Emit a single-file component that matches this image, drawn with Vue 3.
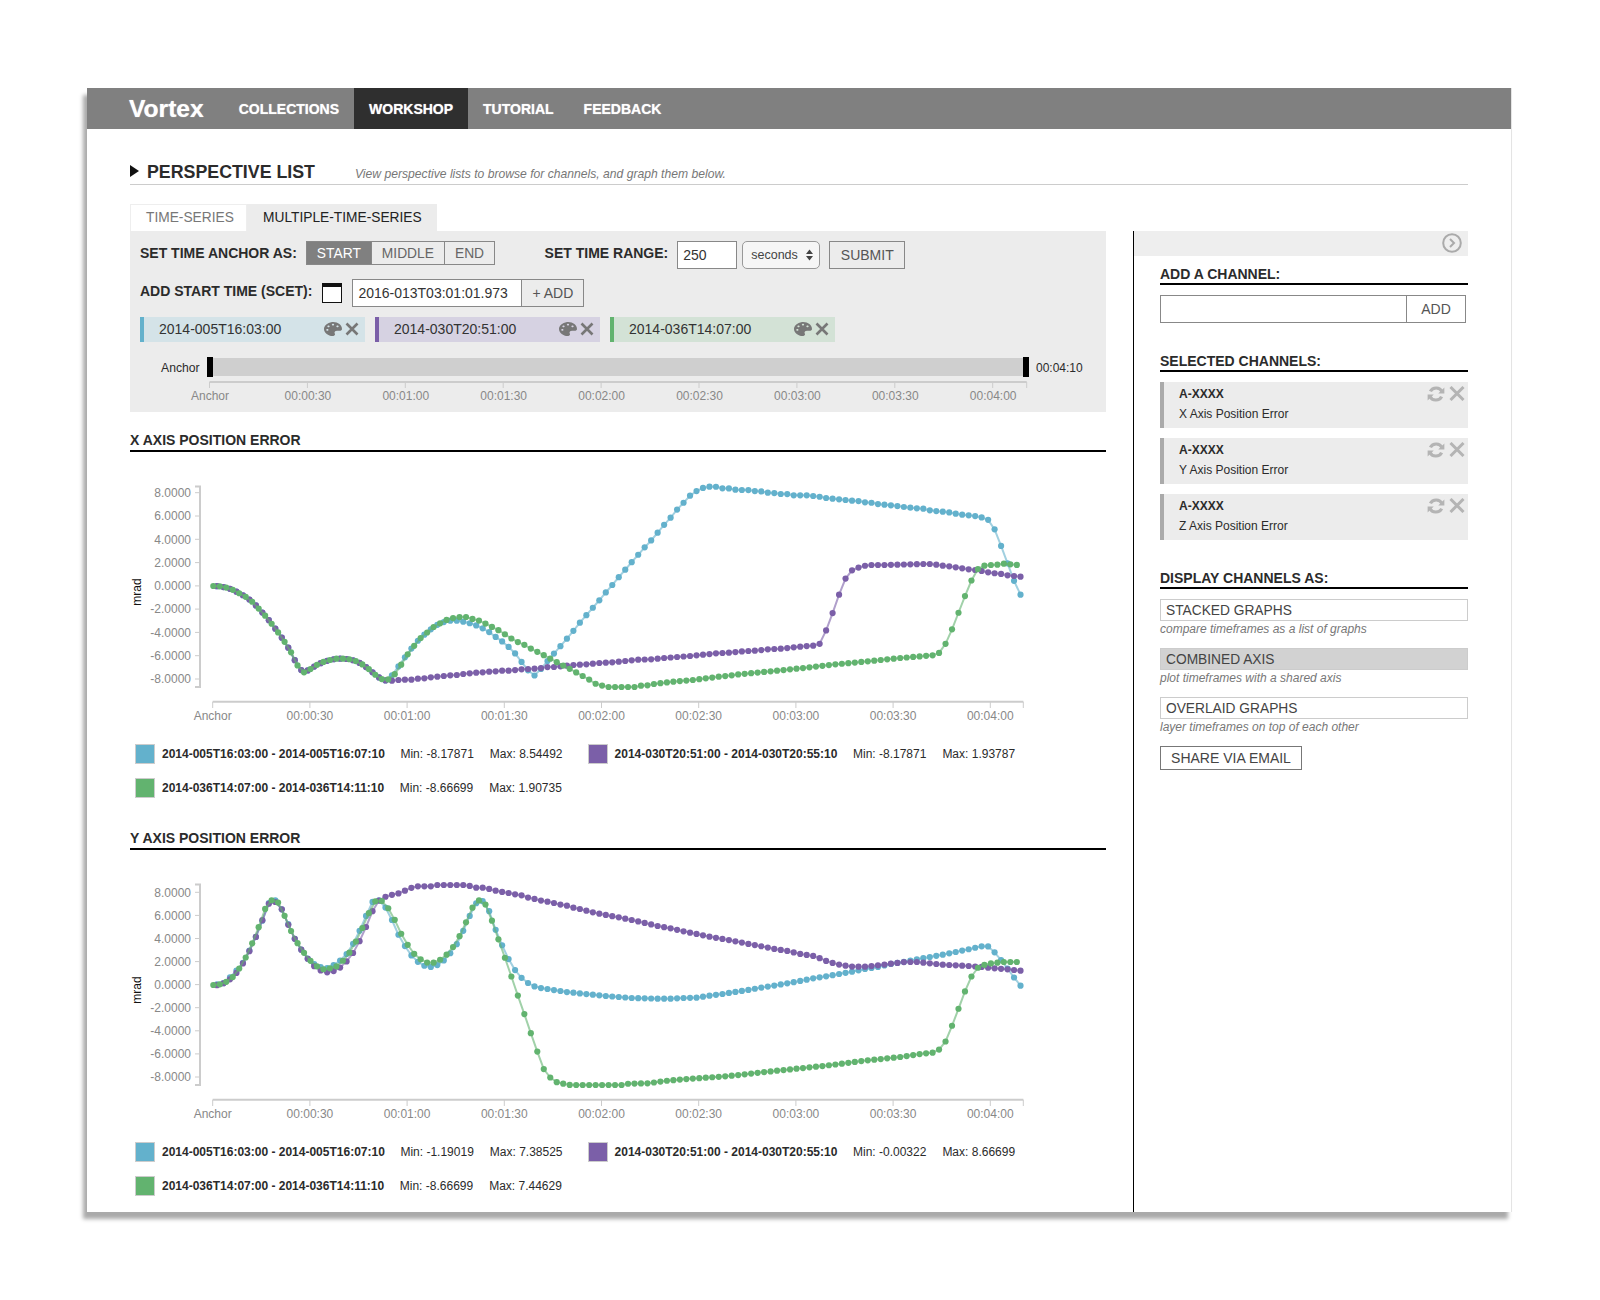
<script setup>
import { ref } from 'vue'

const teal = '#63b1cc'
const purple = '#7b5fa8'
const green = '#62b36f'

const newTime = ref('2016-013T03:01:01.973')
const range = ref('250')
const channel = ref('')

const navItems = ['COLLECTIONS', 'WORKSHOP', 'TUTORIAL', 'FEEDBACK']
const anchors = ['START', 'MIDDLE', 'END']
const chips = [
  { label: '2014-005T16:03:00', cls: 'chip-teal' },
  { label: '2014-030T20:51:00', cls: 'chip-purple' },
  { label: '2014-036T14:07:00', cls: 'chip-green' }
]
const timeLabels = ['Anchor', '00:00:30', '00:01:00', '00:01:30', '00:02:00', '00:02:30', '00:03:00', '00:03:30', '00:04:00']
const yLabels = ['8.0000', '6.0000', '4.0000', '2.0000', '0.0000', '-2.0000', '-4.0000', '-6.0000', '-8.0000']

const rangeTicks = timeLabels.map((label, i) => ({ label, x: 209.5 + 97.9 * i }))
const chartTicks = timeLabels.map((label, i) => ({ label, x: 212.7 + 97.2 * i }))

const selected = [
  { id: 'A-XXXX', name: 'X Axis Position Error' },
  { id: 'A-XXXX', name: 'Y Axis Position Error' },
  { id: 'A-XXXX', name: 'Z Axis Position Error' }
]
const displayModes = [
  { label: 'STACKED GRAPHS', note: 'compare timeframes as a list of graphs', on: false },
  { label: 'COMBINED AXIS', note: 'plot timeframes with a shared axis', on: true },
  { label: 'OVERLAID GRAPHS', note: 'layer timeframes on top of each other', on: false }
]

// traced curves, x/y read off the screenshot at 3x, split into a left and right half
function trace(oy, left, right) {
  const pts = []
  left.forEach(([x, y]) => pts.push([120 + x / 3, oy + y / 3]))
  right.forEach(([x, y]) => {
    const px = 570 + x / 3
    if (px > pts[pts.length - 1][0]) pts.push([px, oy + y / 3])
  })
  return pts
}

// one sample every 2 seconds
function resample(pts, x0) {
  const out = []
  let j = 0
  for (let i = 0; i < 125; i++) {
    const x = x0 + i * 6.48
    while (j < pts.length - 2 && pts[j + 1][0] < x) j++
    const [ax, ay] = pts[j]
    const [bx, by] = pts[j + 1]
    const t = Math.min(1, Math.max(0, (x - ax) / (bx - ax)))
    out.push({ x: +x.toFixed(2), y: +(ay + (by - ay) * t).toFixed(2) })
  }
  return out
}

function series(color, x0, pts) {
  const dots = resample(pts, x0)
  return { color, dots, line: dots.map((d) => d.x + ',' + d.y).join(' ') }
}

const sharedX = [[280,348],[300,349],[320,353],[340,360],[360,371],[380,382],[400,398],[420,420],[440,442],[460,468],[480,495],[500,525],[515,550],[530,583],[550,608],[570,598],[590,585],[610,576],[630,570],[650,566],[670,566],[690,568],[710,574],[730,585],[750,600],[770,618],[790,630],[800,632]]

const tealX = trace(470, [...sharedX,
  [820,612],[845,575],[860,555],[880,528],[900,505],[920,488],[945,468],[965,458],[985,452],[1010,452],[1030,455],[1050,460],[1068,466],[1088,475],[1107,486],[1126,500],[1145,513],[1165,530],[1185,550],[1204,575],[1225,602],[1243,617],[1262,598],[1281,575],[1300,553],[1320,530],[1340,507],[1359,484]
], [[8,483],[28,460],[47,438],[67,415],[87,392],[106,369],[126,346],[145,323],[165,300],[184,278],[204,255],[223,233],[243,212],[262,189],[282,165],[301,144],[320,120],[340,99],[360,77],[378,64],[398,54],[418,50],[437,50],[457,55],[476,55],[495,59],[515,60],[534,60],[553,63],[573,64],[592,68],[612,69],[632,72],[651,72],[670,76],[690,76],[710,76],[729,78],[748,80],[768,84],[787,86],[807,88],[826,90],[845,92],[865,93],[884,97],[903,98],[923,102],[942,104],[962,106],[981,108],[1001,111],[1021,113],[1040,115],[1060,116],[1079,121],[1098,123],[1118,125],[1137,127],[1157,131],[1176,134],[1195,136],[1215,138],[1234,142],[1254,149],[1273,176],[1293,227],[1312,278],[1331,330],[1351,374]])

const purpleX = trace(470, [...sharedX,
  [815,632],[835,630],[855,629],[875,629],[893,626],[913,625],[933,622],[952,620],[972,618],[991,616],[1010,615],[1030,612],[1050,610],[1069,608],[1088,607],[1107,605],[1127,604],[1147,602],[1166,602],[1186,600],[1205,598],[1225,597],[1244,596],[1264,594],[1283,591],[1302,591],[1322,589],[1341,587],[1360,585]
], [[10,585],[49,583],[88,579],[127,577],[165,573],[205,569],[244,568],[283,564],[322,561],[361,558],[400,554],[439,550],[478,548],[517,544],[556,542],[594,538],[634,536],[672,532],[711,528],[731,527],[750,521],[769,480],[789,426],[808,372],[827,325],[847,300],[867,292],[886,287],[905,285],[945,285],[983,284],[1022,283],[1060,282],[1080,282],[1100,284],[1118,287],[1137,289],[1157,292],[1177,295],[1196,298],[1216,300],[1236,303],[1255,307],[1275,310],[1294,312],[1313,316],[1332,318],[1352,320]])

const greenX = trace(470, [...sharedX,
  [825,612],[845,582],[865,550],[883,527],[903,503],[922,487],[942,470],[962,459],[981,449],[1000,444],[1020,441],[1038,441],[1058,447],[1078,452],[1097,461],[1116,471],[1136,481],[1155,493],[1175,506],[1195,517],[1214,525],[1233,536],[1253,546],[1272,556],[1291,566],[1311,577],[1330,587],[1350,597],[1370,608]
], [[18,607],[38,618],[58,629],[78,642],[97,647],[116,651],[136,651],[194,651],[213,647],[233,646],[252,642],[292,637],[331,633],[369,630],[408,625],[447,620],[486,616],[506,613],[603,604],[700,594],[797,583],[894,574],[991,564],[1088,556],[1107,549],[1127,521],[1147,476],[1166,427],[1185,378],[1205,330],[1224,297],[1243,287],[1263,285],[1283,284],[1302,281],[1322,283],[1342,285]])

const tealY = trace(462, [[280,375],[310,370],[338,345],[368,310],[388,272],[408,230],[428,180],[447,128],[465,120],[485,147],[505,193],[524,236],[543,268],[563,296],[582,312],[603,322],[622,324],[640,316],[660,302],[680,282],[699,252],[718,214],[738,168],[757,126],[776,120],[795,140],[815,178],[834,222],[854,257],[873,285],[893,305],[912,317],[932,321],[951,316],[971,302],[990,281],[1010,253],[1029,214],[1048,170],[1068,130],[1087,122],[1107,152],[1126,207],[1146,255],[1165,296],[1185,330],[1204,353],[1224,369],[1243,379],[1262,384],[1282,387],[1301,390],[1321,393],[1340,396],[1360,398]],
  [[8,398],[28,400],[68,404],[107,408],[146,411],[185,414],[224,415],[262,416],[301,416],[340,414],[379,413],[418,407],[457,402],[495,396],[534,390],[573,383],[612,377],[651,370],[690,363],[729,355],[768,349],[807,342],[846,335],[884,327],[923,321],[962,312],[1001,306],[1040,298],[1079,291],[1118,284],[1157,276],[1195,268],[1234,259],[1254,259],[1273,276],[1293,300],[1312,325],[1331,351],[1351,377]])

const purpleY = trace(462, [[280,375],[300,376],[330,358],[350,338],[369,310],[388,274],[408,230],[428,178],[447,130],[465,125],[485,147],[505,195],[524,236],[543,268],[563,296],[582,318],[603,332],[622,337],[642,333],[660,323],[681,303],[700,278],[720,241],[739,199],[759,150],[778,120],[797,110],[817,104],[836,100],[855,92],[875,83],[894,79],[913,79],[933,79],[952,75],[971,75],[1030,75],[1050,78],[1069,83],[1088,83],[1108,87],[1127,92],[1147,96],[1166,99],[1186,103],[1205,106],[1225,113],[1244,117],[1264,122],[1283,125],[1302,129],[1322,134],[1341,137],[1360,141]],
  [[10,143],[30,147],[68,157],[108,165],[146,172],[185,180],[225,189],[263,198],[302,205],[341,214],[380,222],[419,230],[458,237],[497,244],[536,252],[575,259],[614,267],[653,273],[692,282],[731,288],[750,295],[769,303],[789,309],[808,314],[827,317],[847,320],[886,320],[925,316],[964,311],[1003,306],[1041,306],[1080,310],[1118,314],[1157,316],[1196,318],[1236,321],[1275,325],[1313,328],[1352,332]])

const greenY = trace(462, [[280,375],[300,373],[320,365],[340,350],[358,325],[378,291],[397,249],[417,199],[436,145],[457,118],[475,128],[495,170],[514,215],[534,252],[553,280],[572,303],[592,320],[611,328],[630,325],[650,319],[669,302],[689,277],[708,244],[728,202],[748,156],[767,122],[786,123],[805,145],[825,181],[844,222],[864,256],[883,282],[902,298],[922,308],[941,308],[961,299],[981,283],[1000,260],[1019,228],[1038,187],[1058,142],[1078,120],[1097,134],[1117,185],[1136,240],[1156,297],[1175,352],[1194,408],[1214,465],[1233,521],[1253,578],[1272,629],[1292,654],[1311,667],[1330,671],[1350,675],[1370,675]],
  [[155,675],[175,671],[233,670],[292,662],[350,657],[408,653],[467,649],[525,643],[584,636],[642,630],[700,624],[758,618],[817,611],[875,603],[933,597],[991,591],[1050,582],[1088,578],[1107,569],[1127,544],[1147,495],[1166,445],[1185,394],[1205,348],[1224,323],[1244,314],[1264,310],[1283,308],[1302,306],[1322,306],[1342,306]])

function yTicks(top, bottom) {
  const step = (bottom - top) / 8
  return yLabels.map((label, i) => ({ label, y: +(top + step * i).toFixed(1) }))
}

const charts = [
  {
    title: 'X AXIS POSITION ERROR',
    ticks: yTicks(492.7, 679),
    lines: [series(teal, 217, tealX), series(purple, 217, purpleX), series(green, 213.3, greenX)],
    legend: [
      { color: teal, span: '2014-005T16:03:00 - 2014-005T16:07:10', min: '-8.17871', max: '8.54492' },
      { color: purple, span: '2014-030T20:51:00 - 2014-030T20:55:10', min: '-8.17871', max: '1.93787' },
      { color: green, span: '2014-036T14:07:00 - 2014-036T14:11:10', min: '-8.66699', max: '1.90735' }
    ]
  },
  {
    title: 'Y AXIS POSITION ERROR',
    ticks: yTicks(494.3, 679),
    lines: [series(teal, 217, tealY), series(purple, 217, purpleY), series(green, 213.3, greenY)],
    legend: [
      { color: teal, span: '2014-005T16:03:00 - 2014-005T16:07:10', min: '-1.19019', max: '7.38525' },
      { color: purple, span: '2014-030T20:51:00 - 2014-030T20:55:10', min: '-0.00322', max: '8.66699' },
      { color: green, span: '2014-036T14:07:00 - 2014-036T14:11:10', min: '-8.66699', max: '7.44629' }
    ]
  }
]

const palettePath = 'M204.3 5C104.9 24.4 24.8 104.3 5.2 203.4c-37 187 131.7 326.4 258.8 306.7 41.2-6.4 61.4-54.6 42.5-91.7-23.1-45.4 9.9-98.4 60.9-98.4h79.7c35.8 0 64.8-29.6 64.9-65.3C511.5 97.1 368.1-26.9 204.3 5zM96 320c-17.7 0-32-14.3-32-32s14.3-32 32-32 32 14.3 32 32-14.3 32-32 32zm32-128c-17.7 0-32-14.3-32-32s14.3-32 32-32 32 14.3 32 32-14.3 32-32 32zm128-64c-17.7 0-32-14.3-32-32s14.3-32 32-32 32 14.3 32 32-14.3 32-32 32zm128 64c-17.7 0-32-14.3-32-32s14.3-32 32-32 32 14.3 32 32-14.3 32-32 32z'
</script>

<template>
  <div class="page">
    <div class="window">
      <nav class="nav">
        <span class="logo">Vortex</span>
        <a v-for="item in navItems" :key="item" class="nav-item" :class="{ active: item === 'WORKSHOP' }">{{ item }}</a>
      </nav>

      <div class="body">
        <header class="title-row">
          <span class="triangle"></span>
          <h1>PERSPECTIVE LIST</h1>
          <em>View perspective lists to browse for channels, and graph them below.</em>
        </header>

        <div class="columns">
          <main class="main">
            <div class="tabs">
              <span class="tab">TIME-SERIES</span>
              <span class="tab current">MULTIPLE-TIME-SERIES</span>
            </div>

            <section class="panel">
              <div class="row">
                <span class="label">SET TIME ANCHOR AS:</span>
                <div class="segments">
                  <button v-for="a in anchors" :key="a" type="button" :class="{ on: a === 'START' }">{{ a }}</button>
                </div>
                <span class="label range-label">SET TIME RANGE:</span>
                <input v-model="range" class="range-input" type="text">
                <div class="select">
                  <span>seconds</span>
                  <svg width="7" height="12" viewBox="0 0 7 12"><path d="M3.5 0.5 7 5H0zM3.5 11.5 0 7h7z" /></svg>
                </div>
                <button type="button" class="submit">SUBMIT</button>
              </div>

              <div class="row">
                <span class="label">ADD START TIME (SCET):</span>
                <span class="calendar"></span>
                <div class="time-field">
                  <input v-model="newTime" type="text">
                  <button type="button">+ ADD</button>
                </div>
              </div>

              <div class="chips">
                <div v-for="c in chips" :key="c.label" class="chip" :class="c.cls">
                  <span>{{ c.label }}</span>
                  <svg class="palette" width="18" height="14" viewBox="0 0 512 512" preserveAspectRatio="none"><path :d="palettePath" /></svg>
                  <svg class="close" width="14" height="14" viewBox="0 0 14 14"><path d="M1.5 1.5 12.5 12.5M12.5 1.5 1.5 12.5" /></svg>
                </div>
              </div>

              <div class="slider">
                <span class="slider-label">Anchor</span>
                <span class="handle"></span>
                <div class="slider-bar"></div>
                <span class="handle"></span>
                <span class="slider-end">00:04:10</span>
              </div>

              <svg class="range-axis" width="976" height="34" viewBox="130 378 976 34">
                <path class="axis-line" d="M209.5 382H1026.7" />
                <path v-for="t in rangeTicks" :key="t.label" class="axis-tick" :d="`M${t.x} 382V388`" />
                <path class="axis-tick" d="M1026.7 382V388" />
                <text v-for="t in rangeTicks" :key="t.label" class="tick-text" :x="t.x + 0.5" y="400" text-anchor="middle">{{ t.label }}</text>
              </svg>
            </section>

            <section v-for="chart in charts" :key="chart.title" class="chart-block">
              <h2 class="chart-title">{{ chart.title }}</h2>
              <svg class="chart" width="976" height="253" viewBox="130 470 976 253">
                <path class="axis-line" d="M195 486.5H200V687H195" />
                <g v-for="t in chart.ticks" :key="t.label">
                  <path class="axis-tick" :d="`M195 ${t.y}H200`" />
                  <text class="tick-text" x="191" :y="t.y + 4.2" text-anchor="end">{{ t.label }}</text>
                </g>
                <text class="unit" x="0" y="0" text-anchor="middle" transform="translate(140.5 592) rotate(-90)">mrad</text>

                <path class="axis-line" d="M212.7 701.7H1023.3" />
                <path v-for="t in chartTicks" :key="t.label" class="axis-tick" :d="`M${t.x} 701.7V708`" />
                <path class="axis-tick" d="M1023.3 701.7V708" />
                <text v-for="t in chartTicks" :key="t.label" class="tick-text" :x="t.x" y="720" text-anchor="middle">{{ t.label }}</text>

                <g v-for="s in chart.lines" :key="s.color">
                  <polyline class="trace" :points="s.line" :stroke="s.color" />
                  <circle v-for="(d, i) in s.dots" :key="i" :cx="d.x" :cy="d.y" r="3.1" :fill="s.color" />
                </g>
              </svg>

              <div class="legend">
                <div v-for="l in chart.legend" :key="l.span" class="legend-item">
                  <span class="swatch" :style="{ background: l.color }"></span>
                  <b>{{ l.span }}</b>
                  <span>Min: {{ l.min }}</span>
                  <span>Max: {{ l.max }}</span>
                </div>
              </div>
            </section>
          </main>

          <aside class="side">
            <div class="side-bar">
              <svg width="20" height="20" viewBox="0 0 20 20"><circle cx="10" cy="10" r="8.8" /><path d="M8 6 12 10 8 14" /></svg>
            </div>

            <div class="side-inner">
              <h3>ADD A CHANNEL:</h3>
              <div class="channel-field">
                <input v-model="channel" type="text">
                <button type="button">ADD</button>
              </div>

              <h3>SELECTED CHANNELS:</h3>
              <div v-for="s in selected" :key="s.name" class="card">
                <b>{{ s.id }}</b>
                <span>{{ s.name }}</span>
                <div class="card-icons">
                  <svg class="card-sync" width="18" height="16" viewBox="0 0 17 16" preserveAspectRatio="none">
                    <path d="M14.2 5.6A6 6 0 0 0 3.2 5.4M2.8 10.4A6 6 0 0 0 13.8 10.6" />
                    <path class="head" d="M16.4 1.6V7.6H10.6zM0.6 14.4V8.4H6.4z" />
                  </svg>
                  <svg class="card-x" width="16" height="15" viewBox="0 0 16 15"><path d="M1.5 1 14.5 14M14.5 1 1.5 14" /></svg>
                </div>
              </div>

              <h3 class="spaced">DISPLAY CHANNELS AS:</h3>
              <div v-for="m in displayModes" :key="m.label" class="mode">
                <div class="mode-box" :class="{ on: m.on }">{{ m.label }}</div>
                <em>{{ m.note }}</em>
              </div>
              <button type="button" class="share">SHARE VIA EMAIL</button>
            </div>
          </aside>
        </div>
      </div>
    </div>
  </div>
</template>

<style>
html, body {
  margin: 0;
  background: #fff;
}
</style>

<style scoped>
.page {
  height: 1300px;
  padding: 88px 0 0 87px;
  box-sizing: border-box;
  font-family: "Liberation Sans", Arial, sans-serif;
  font-size: 14px;
  color: #2b2b2b;
}

.window {
  width: 1425px;
  height: 1124px;
  box-sizing: border-box;
  background: #fff;
  border-right: 1px solid #e4e4e4;
  box-shadow: -4px 7px 4px #aaa;
}

.nav {
  display: flex;
  height: 41px;
  background: #808080;
  color: #fff;
  font-weight: bold;
  text-shadow: 0 0 1px rgba(255, 255, 255, 0.7);
}

.logo {
  margin: 0 20px 0 42px;
  font-size: 24.6px;
  line-height: 41px;
}

.nav-item {
  padding: 0 15px;
  line-height: 43px;
}

.nav-item.active {
  background: #2f2f2f;
}

.body {
  padding: 0 43px;
}

.title-row {
  display: flex;
  align-items: center;
  height: 26px;
  margin-top: 29px;
  border-bottom: 1px solid #ccc;
}

.triangle {
  width: 0;
  height: 0;
  border-left: 9px solid #111;
  border-top: 6.5px solid transparent;
  border-bottom: 6.5px solid transparent;
  margin-right: 8px;
}

h1 {
  margin: 2px 0 0;
  font-size: 17.8px;
  line-height: 20px;
}

.title-row em {
  margin: 6px 0 0 40px;
  font-size: 12.15px;
  color: #777;
}

.columns {
  display: flex;
  margin-top: 19px;
}

.main {
  width: 976px;
  margin-right: 27px;
}

.tabs {
  display: flex;
  height: 27px;
  font-size: 13.75px;
}

.tab {
  width: 117px;
  box-sizing: border-box;
  padding-left: 15px;
  color: #777;
  border: 1px solid #eee;
  border-bottom: 0;
  line-height: 26px;
}

.tab.current {
  width: 190px;
  padding-left: 16px;
  color: #222;
  background: #ececec;
  border: 0;
  line-height: 28px;
}

.panel {
  padding: 10px 0 0 10px;
  height: 181px;
  box-sizing: border-box;
  background: #ececec;
}

.row {
  display: flex;
  height: 28px;
  margin-bottom: 10px;
}

.label {
  font-weight: bold;
  line-height: 24px;
  white-space: nowrap;
}

button {
  font: inherit;
  color: #555;
  background: none;
  padding: 0;
  border: 0;
  border-radius: 0;
}

input {
  font: inherit;
  color: #333;
  background: #fff;
  outline: none;
  border: 0;
  padding: 0;
  border-radius: 0;
}

.segments {
  display: flex;
  height: 24px;
  margin-left: 9px;
  border: 1px solid #888;
  box-sizing: border-box;
  font-size: 13.8px;
}

.segments button {
  padding: 0 10px;
  border-left: 1px solid #888;
  color: #666;
}

.segments button:first-child {
  border-left: 0;
}

.segments button.on {
  background: #808080;
  color: #fff;
}

.range-label {
  margin-left: 49.5px;
}

.range-input {
  width: 60px;
  height: 28px;
  box-sizing: border-box;
  margin-left: 9px;
  padding-left: 5px;
  border: 1px solid #888;
}

.select {
  display: flex;
  align-items: center;
  justify-content: space-between;
  width: 78px;
  height: 28px;
  box-sizing: border-box;
  margin-left: 5px;
  padding: 0 6px 0 8px;
  border: 1px solid #999;
  border-radius: 5px;
  background: #f6f6f6;
  font-size: 12.5px;
  color: #444;
}

.select path {
  fill: #444;
}

.submit {
  width: 76px;
  height: 28px;
  box-sizing: border-box;
  margin-left: 9px;
  border: 1px solid #888;
}

.calendar {
  width: 20px;
  height: 20px;
  box-sizing: border-box;
  margin: 4px 0 0 10px;
  background: #fff;
  border: 1px solid #111;
  border-top-width: 4px;
}

.time-field {
  display: flex;
  width: 232px;
  height: 28px;
  box-sizing: border-box;
  margin-left: 10px;
  border: 1px solid #888;
}

.time-field input {
  width: 168px;
  padding-left: 5px;
  box-sizing: border-box;
}

.time-field button {
  flex: 1;
  border-left: 1px solid #888;
}

.chips {
  display: flex;
  gap: 10px;
}

.chip {
  display: flex;
  align-items: center;
  width: 225px;
  height: 25px;
  box-sizing: border-box;
  padding: 0 0 2px 15px;
  border-left: 4px solid;
  color: #333;
}

.chip span {
  flex: 1;
}

.chip-teal {
  background: #d4e3e8;
  border-color: #63b1cc;
}

.chip-purple {
  background: #d6d2e2;
  border-color: #7b5fa8;
}

.chip-green {
  background: #d3e2d6;
  border-color: #62b36f;
}

.palette {
  fill: #777;
  margin-right: 3px;
}

.close {
  stroke: #777;
  stroke-width: 2.6;
  margin-right: 6px;
}

.slider {
  display: flex;
  align-items: center;
  height: 20px;
  margin-top: 15px;
  font-size: 12px;
}

.slider-label {
  width: 39px;
  margin: 0 7px 0 21px;
  padding-top: 2px;
  font-size: 12.2px;
}

.handle {
  width: 6px;
  height: 20px;
  background: #000;
}

.slider-bar {
  width: 810px;
  height: 18px;
  background: #cfcfcf;
}

.slider-end {
  margin-left: 7px;
  padding-top: 1px;
}

.range-axis {
  display: block;
  margin: 1px 0 0 -10px;
}

.axis-line {
  fill: none;
  stroke: #ccc;
  stroke-width: 2;
}

.axis-tick {
  stroke: #ccc;
  stroke-width: 1;
}

.tick-text {
  font-size: 12px;
  fill: #888;
}

.unit {
  font-size: 12px;
  fill: #111;
}

.chart-block {
  height: 398px;
}

.chart-title {
  margin: 0;
  padding: 20px 0 2px;
  font-size: 14px;
  line-height: 16px;
  border-bottom: 2px solid #000;
}

.chart {
  display: block;
  margin-top: 18px;
}

.trace {
  fill: none;
  stroke-width: 2;
  stroke-opacity: 0.6;
}

.legend {
  display: flex;
  flex-wrap: wrap;
  column-gap: 25px;
  row-gap: 14px;
  margin-top: 21px;
  padding-left: 5px;
  font-size: 12px;
}

.legend-item {
  display: flex;
  align-items: center;
  gap: 16px;
  height: 20px;
  white-space: nowrap;
}

.legend-item b {
  margin: 0 -0.4px 0 -9px;
}

.swatch {
  width: 20px;
  height: 20px;
  box-sizing: border-box;
  border: 1px solid #ccc;
}

.side {
  width: 334px;
  margin-top: 27px;
  height: 981px;
  border-left: 1px solid #000;
}

.side-bar {
  display: flex;
  justify-content: flex-end;
  align-items: center;
  height: 25px;
  padding: 0 6px 2px 0;
  box-sizing: border-box;
  background: #eee;
}

.side-bar circle,
.side-bar path {
  fill: none;
  stroke: #aaa;
  stroke-width: 2;
}

.side-inner {
  padding-left: 26px;
}

h3 {
  margin: 10px 0 0;
  padding-bottom: 1px;
  font-size: 14px;
  line-height: 16px;
  border-bottom: 2px solid #000;
}

h3.spaced {
  margin-top: 30px;
}

.channel-field {
  display: flex;
  width: 306px;
  height: 28px;
  box-sizing: border-box;
  margin: 10px 0 30px;
  border: 1px solid #888;
}

.channel-field input {
  width: 245px;
}

.channel-field button {
  flex: 1;
  border-left: 1px solid #888;
}

.channel-field + h3 {
  margin-top: 0;
}

.card {
  position: relative;
  display: flex;
  flex-direction: column;
  gap: 4px;
  height: 46px;
  box-sizing: border-box;
  margin-top: 10px;
  padding: 4px 0 0 15px;
  background: #ececec;
  border-left: 4px solid #aaa;
  font-size: 12px;
  line-height: 16px;
}

.card-icons {
  position: absolute;
  top: 4px;
  right: 3px;
  display: flex;
  gap: 4px;
}

.card-sync path {
  fill: none;
  stroke: #b4b4b4;
  stroke-width: 3;
}

.card-sync path.head {
  fill: #b4b4b4;
  stroke: none;
}

.card-x {
  stroke: #b4b4b4;
  stroke-width: 3;
}

.mode {
  margin-top: 10px;
  margin-bottom: 11px;
  font-size: 13.75px;
}

.mode + .mode {
  margin-top: 0;
}

.mode-box {
  height: 22px;
  box-sizing: border-box;
  padding-left: 5px;
  border: 1px solid #ccc;
  line-height: 21px;
  color: #444;
}

.mode-box.on {
  background: #d2d2d2;
}

.mode em {
  display: block;
  font-size: 12px;
  line-height: 16px;
  color: #777;
}

.share {
  display: block;
  width: 142px;
  height: 24px;
  box-sizing: border-box;
  border: 1px solid #777;
  color: #444;
}
</style>
